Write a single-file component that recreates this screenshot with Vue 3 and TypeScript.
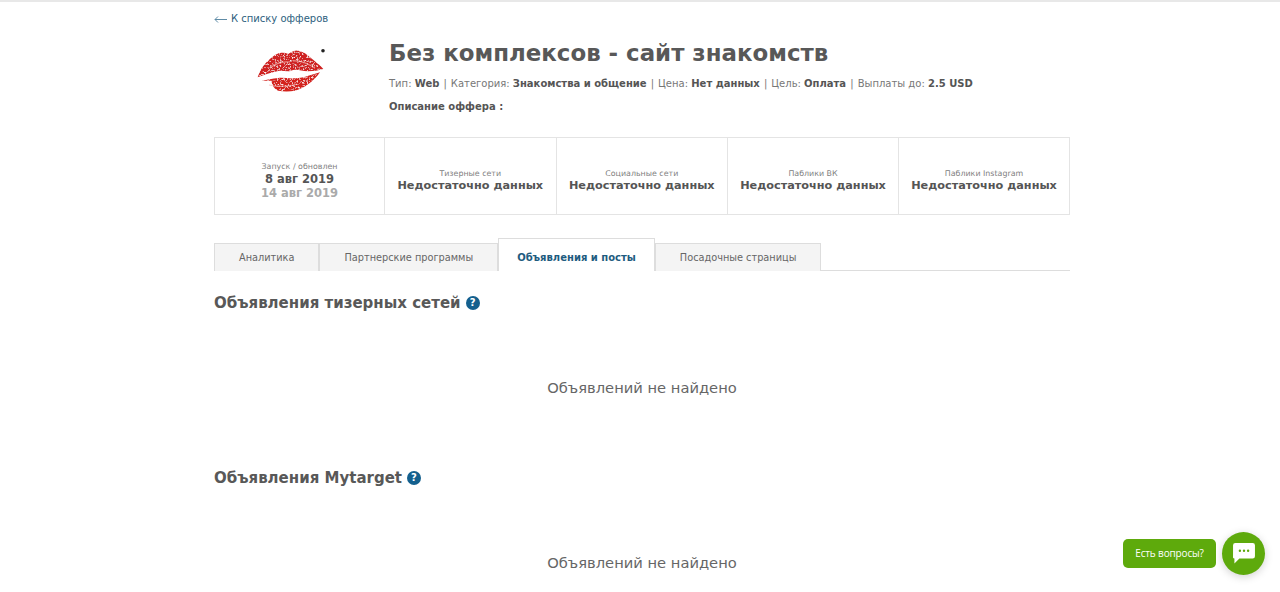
<script setup lang="ts">
interface Stat { label: string; value: string }
const stats: Stat[] = [
  { label: 'Тизерные сети', value: 'Недостаточно данных' },
  { label: 'Социальные сети', value: 'Недостаточно данных' },
  { label: 'Паблики ВК', value: 'Недостаточно данных' },
  { label: 'Паблики Instagram', value: 'Недостаточно данных' },
]
const tabs = ['Аналитика', 'Партнерские программы', 'Объявления и посты', 'Посадочные страницы']
const activeTab = 2
const sections = ['Объявления тизерных сетей', 'Объявления Mytarget']
const meta = [
  ['Тип:', 'Web'],
  ['Категория:', 'Знакомства и общение'],
  ['Цена:', 'Нет данных'],
  ['Цель:', 'Оплата'],
  ['Выплаты до:', '2.5 USD'],
]
</script>

<template>
  <div class="page">
    <div class="wrap">
      <a class="back"><svg class="arrow" width="13" height="7" viewBox="0 0 13 7"><path d="M13 3.500H1M4 .5 1 3.500l3 3" fill="none" stroke="#5f8ba6" stroke-width="1"/></svg>К списку офферов</a>
      <header class="head">
        <div class="logo">
          <svg width="70" height="46" viewBox="0 0 70 46">
            <defs>
              <filter id="grain" x="0" y="0" width="100%" height="100%">
                <feTurbulence type="fractalNoise" baseFrequency="0.6" numOctaves="2" seed="7" result="n"/>
                <feColorMatrix in="n" type="matrix" values="0 0 0 0 1  0 0 0 0 .85  0 0 0 0 .85  0 0 0 4 -2.150" result="w"/>
                <feComposite in="w" in2="SourceAlpha" operator="in" result="s"/>
                <feMerge result="m"><feMergeNode in="SourceGraphic"/><feMergeNode in="s"/></feMerge>
                <feGaussianBlur in="m" stdDeviation=".35"/>
              </filter>
            </defs>
            <g filter="url(#grain)">
              <path d="M.7 28.300C3 21 7 15 11.300 11.700 15 8 19 4.500 23 4c3.500-.5 6 .2 8.300 1 3-2 7-3.800 10-3.300C46 2.500 49.500 5 53 8.300c5 3.800 10 8 13.300 11.700-5 1.300-10 2.300-15 2.300-5 .2-9-1.800-13.300-1.600-2.500.2-4.500 1.600-6.700 1.600-3.500.2-6.500-1-10-.3C14 23.500 7 26 .7 28.300Z" fill="#cf2321"/>
              <path d="M4.700 31.700c5-1 11-2.400 16.600-2.800 5.500-.6 11 1 16.700.4 5-.4 9.500-1.200 13.300-2.600 4-1 8-2.200 11.700-3.400-3 4.500-7 8.500-11.700 11.700-4 3-8.500 5.500-13.300 6.700-5.500 1-11.500 1-16.700 0-2.500-.7-7-5.500-6.600-10Z" fill="#d4201d"/>
              <path d="M13 19c6-5 12-7 20-6M36 12c6-1 14 2 22 7M12 36c8 2 18 2 28-1" fill="none" stroke="#f2b5b0" stroke-width="1.200" opacity=".7"/>
            </g>
            <circle cx="66" cy="1.800" r="1.800" fill="#222"/>
          </svg>
        </div>
        <div class="info">
          <h1>Без комплексов - сайт знакомств</h1>
          <p class="meta">
            <template v-for="(m, i) in meta" :key="m[0]"><span v-if="i" class="sep"> | </span>{{ m[0] }} <b>{{ m[1] }}</b></template>
          </p>
          <p class="desc">Описание оффера :</p>
        </div>
      </header>

      <section class="stats">
        <div class="cell">
          <span class="label">Запуск / обновлен</span>
          <b class="value date">8 авг 2019</b>
          <b class="value date muted">14 авг 2019</b>
        </div>
        <div v-for="s in stats" :key="s.label" class="cell">
          <span class="label">{{ s.label }}</span>
          <b class="value">{{ s.value }}</b>
        </div>
      </section>

      <nav class="tabs">
        <a v-for="(t, i) in tabs" :key="t" class="tab" :class="{ active: i === activeTab }">{{ t }}</a>
      </nav>

      <section v-for="s in sections" :key="s" class="block">
        <h2>{{ s }}<span class="help">?</span></h2>
        <p class="empty">Объявлений не найдено</p>
      </section>
    </div>

    <div class="chat">
      <span class="bubble">Есть вопросы?</span>
      <span class="fab">
        <svg width="22" height="21" viewBox="0 0 24 23"><path d="M2.500 0h19A2.500 2.500 0 0 1 24 2.500v12a2.500 2.500 0 0 1-2.500 2.500H7l-5.500 5.500V17A2 2 0 0 1 0 14.500v-12A2.500 2.500 0 0 1 2.500 0Z" fill="#fff"/><circle cx="7.500" cy="8.500" r="1.300" fill="#5eaa0c"/><circle cx="12" cy="8.500" r="1.300" fill="#5eaa0c"/><circle cx="16.500" cy="8.500" r="1.300" fill="#5eaa0c"/></svg>
      </span>
    </div>
  </div>
</template>

<style>
html, body { margin: 0; background: #fff; overflow: hidden; }
</style>

<style scoped>
.page {
  height: 592px;
  overflow: hidden;
  border-top: 2px solid #e8e8e8;
  box-sizing: border-box;
  font-family: "DejaVu Sans", sans-serif;
  color: #555;
}
.wrap { width: 856px; margin: 0 auto 0 214px; }
.back {
  display: flex; align-items: center; gap: 4px;
  height: 16px; padding-top: 9px;
  font-size: 10px; line-height: 16px;
  color: #2d5f7e;
}
.arrow { flex: none; }
.head { display: flex; height: 110px; }
.logo { width: 175px; flex: none; padding: 22px 0 0 43px; box-sizing: border-box; }
.info { flex: 1; }
h1 { margin: 10px 0 0; font-size: 22.900px; line-height: 32px; font-weight: 700; color: #585858; }
.meta { margin: 7px 0 0; font-size: 10px; line-height: 16px; color: #777; }
.sep { margin: 0 .9px; }
.meta b, .desc { font-weight: 700; font-size: 10px; color: #555; }
.desc { margin: 7px 0 0; line-height: 16px; }
.stats {
  display: grid; grid-template-columns: 170px 171.500px 171.500px 171px 1fr;
  height: 78px; border: 1px solid #e4e4e4; box-sizing: border-box;
}
.cell {
  display: flex; flex-direction: column; align-items: center; justify-content: center;
  padding-top: 10px; box-sizing: border-box;
  border-right: 1px solid #e4e4e4;
}
.cell:last-child { border-right: 0; }
.label { font-size: 7.900px; line-height: 10px; color: #808080; }
.value { font-size: 11.250px; line-height: 14px; font-weight: 700; color: #555; }
.date { font-size: 11.500px; }
.muted { color: #aaa; }
.tabs { display: flex; align-items: flex-end; height: 33px; margin-top: 23px; border-bottom: 1px solid #ddd; box-sizing: border-box; }
.tab {
  display: flex; align-items: center; justify-content: center;
  height: 28px; box-sizing: border-box; padding: 0 24px;
  background: #f4f4f4; border: 1px solid #ddd; border-bottom: 0;
  font-size: 9.750px; line-height: 1; color: #666; margin-bottom: -1px;
}
.tab.active {
  height: 33px; padding: 5px 18px 0 18px; background: #fff; font-size: 10px; font-weight: 700; color: #1e5c80;
}
.block { height: 175px; }
h2 { display: flex; align-items: center; gap: 5px; margin: 0; padding-top: 22px; font-size: 15px; line-height: 20px; font-weight: 700; color: #585858; }
.help {
  width: 14px; height: 14px; border-radius: 50%; background: #14608e; color: #fff;
  font-size: 10px; line-height: 14px; text-align: center;
}
.empty { margin: 65px 0 0; text-align: center; font-size: 14.700px; line-height: 20px; color: #666; }
.chat { position: fixed; right: 15px; bottom: 17px; display: flex; align-items: center; gap: 6px; }
.bubble {
  height: 29px; width: 93px; border-radius: 5px; background: #5eaa0c; color: #fff;
  font: 10px/29px "Open Sans", sans-serif; letter-spacing: -.15px; text-align: center;
}
.fab {
  width: 43px; height: 43px; border-radius: 50%; background: #5eaa0c;
  display: flex; align-items: center; justify-content: center;
  box-shadow: 0 2px 8px rgba(0,0,0,.18);
}
</style>
